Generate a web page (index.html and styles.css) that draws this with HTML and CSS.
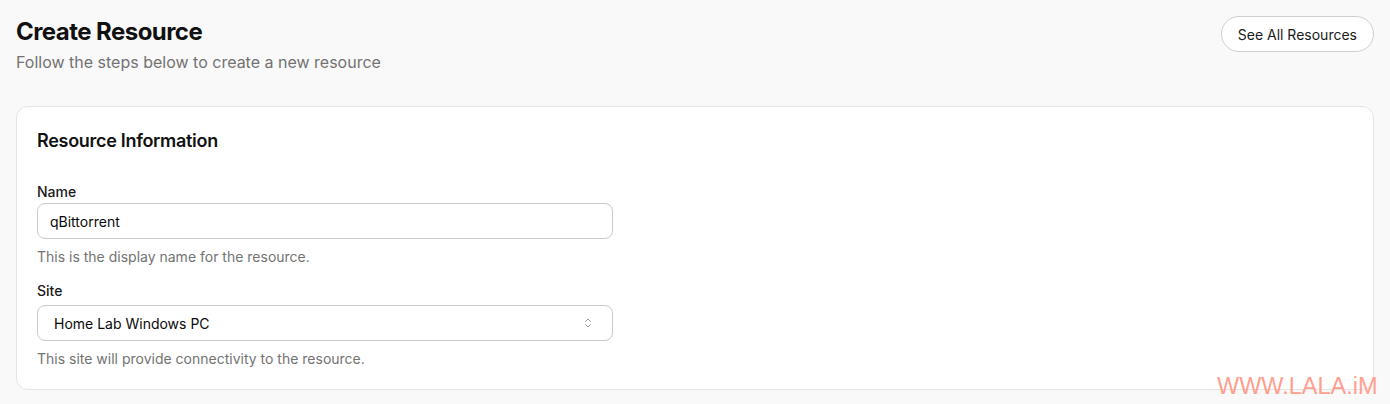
FILE: index.html
```html
<!DOCTYPE html>
<html lang="en">
<head>
    <meta charset="UTF-8">
    <meta name="viewport" content="width=device-width, initial-scale=1.0">
    <title>Create Resource</title>
    <link rel="stylesheet" href="styles.css">
</head>
<body>
    <div class="page">
        <div class="page-header">
            <div>
                <h1>Create Resource</h1>
                <p class="subtitle">Follow the steps below to create a new resource</p>
            </div>
            <button class="outline-btn">See All Resources</button>
        </div>

        <div class="card">
            <h2>Resource Information</h2>

            <div class="field">
                <label class="label label-name" for="name">Name</label>
                <input class="input" type="text" id="name" value="qBittorrent">
                <p class="hint">This is the display name for the resource.</p>
            </div>

            <div class="field field-site">
                <label class="label label-site">Site</label>
                <div class="select">
                    <span>Home Lab Windows PC</span>
                    <svg class="chevrons" width="8" height="12" viewBox="0 0 8 12">
                        <polyline points="1.5,4.5 4,2 6.5,4.5" />
                        <polyline points="1.5,7.5 4,10 6.5,7.5" />
                    </svg>
                </div>
                <p class="hint">This site will provide connectivity to the resource.</p>
            </div>
        </div>
    </div>

    <div class="watermark">WWW.LALA.iM</div>
</body>
</html>
```

FILE: styles.css
```css
body {
    font-family: Inter, "Noto Sans", sans-serif;
    background-color: #f9f9f9;
    color: #0a0a0a;
    margin: 0;
    padding: 0;
}

.page {
    padding: 16px;
}

.page-header {
    display: flex;
    justify-content: space-between;
    align-items: flex-start;
}

h1 {
    margin: 0;
    font-size: 24px;
    line-height: 32px;
    font-weight: 700;
    letter-spacing: -0.55px;
    color: #111;
}

.subtitle {
    margin: 2px 0 0;
    font-size: 16px;
    line-height: 24px;
    color: #737373;
}

.outline-btn {
    height: 36px;
    padding: 0 16px;
    background: white;
    border: 1px solid #cfcfcf;
    border-radius: 999px;
    font-family: inherit;
    font-size: 14px;
    font-weight: 400;
    color: #1a1a1a;
    cursor: pointer;
}

.card {
    margin-top: 32px;
    background: white;
    border: 1px solid #e5e5e5;
    border-radius: 12px;
    padding: 20px;
}

h2 {
    margin: 0;
    font-size: 18px;
    line-height: 28px;
    font-weight: 600;
    letter-spacing: -0.3px;
    color: #111;
}

.field {
    margin-top: 30px;
}

.field-site {
    margin-top: 17px;
}

.label {
    display: block;
    font-size: 14px;
    line-height: 14px;
    font-weight: 450;
    color: #1a1a1a;
}

.label-name {
    margin-bottom: 4px;
}

.label-site {
    margin-bottom: 7px;
}

.input,
.select {
    box-sizing: border-box;
    width: 576px;
    height: 36px;
    border: 1px solid #cacaca;
    border-radius: 8px;
    font-family: inherit;
    font-size: 14px;
    color: #0a0a0a;
    background: white;
}

.input {
    display: block;
    padding: 0 12px;
    outline: none;
}

.select {
    display: flex;
    align-items: center;
    justify-content: space-between;
    padding: 0 20px 0 16px;
}

.chevrons polyline {
    fill: none;
    stroke: #9a9a9a;
    stroke-width: 1;
    stroke-linecap: round;
    stroke-linejoin: round;
}

.hint {
    margin: 8px 0 0;
    font-size: 14px;
    line-height: 20px;
    color: #737373;
}

.watermark {
    position: absolute;
    left: 1217px;
    top: 373px;
    font-family: "Liberation Sans", Arial, sans-serif;
    font-size: 23.5px;
    color: #ff9f8f;
}
```
